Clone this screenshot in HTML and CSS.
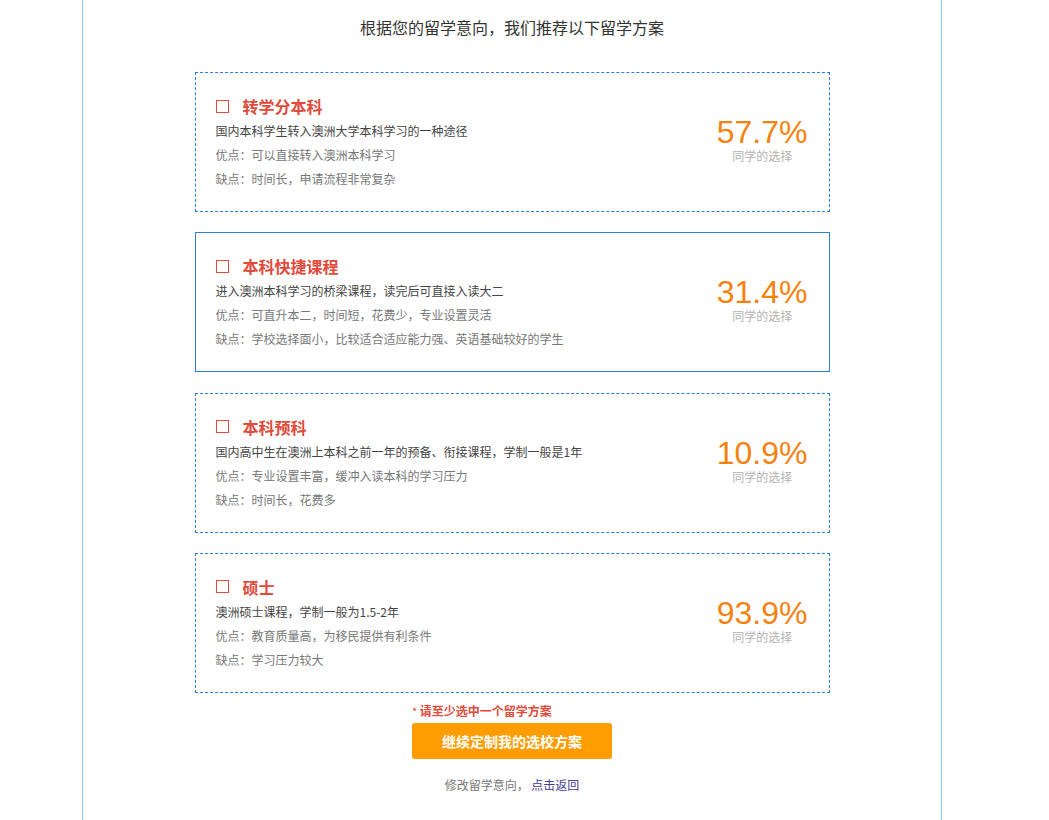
FILE: index.html
```html
<!DOCTYPE html>
<html lang="zh-CN">
<head>
<meta charset="utf-8">
<title>留学方案</title>
<link rel="stylesheet" href="styles.css">
</head>
<body>
<div class="page">
  <h1 class="heading">根据您的留学意向，我们推荐以下留学方案</h1>
  <div class="plans">
    <div class="plan">
      <div class="plan-info">
        <div class="plan-title"><span class="check"></span><span>转学分本科</span></div>
        <p class="desc">国内本科学生转入澳洲大学本科学习的一种途径</p>
        <p class="line">优点：可以直接转入澳洲本科学习</p>
        <p class="line">缺点：时间长，申请流程非常复杂</p>
      </div>
      <div class="plan-rate"><span class="pct">57.7%</span><span class="pct-label">同学的选择</span></div>
    </div>
    <div class="plan plan-active">
      <div class="plan-info">
        <div class="plan-title"><span class="check"></span><span>本科快捷课程</span></div>
        <p class="desc">进入澳洲本科学习的桥梁课程，读完后可直接入读大二</p>
        <p class="line">优点：可直升本二，时间短，花费少，专业设置灵活</p>
        <p class="line">缺点：学校选择面小，比较适合适应能力强、英语基础较好的学生</p>
      </div>
      <div class="plan-rate"><span class="pct">31.4%</span><span class="pct-label">同学的选择</span></div>
    </div>
    <div class="plan">
      <div class="plan-info">
        <div class="plan-title"><span class="check"></span><span>本科预科</span></div>
        <p class="desc">国内高中生在澳洲上本科之前一年的预备、衔接课程，学制一般是1年</p>
        <p class="line">优点：专业设置丰富，缓冲入读本科的学习压力</p>
        <p class="line">缺点：时间长，花费多</p>
      </div>
      <div class="plan-rate"><span class="pct">10.9%</span><span class="pct-label">同学的选择</span></div>
    </div>
    <div class="plan">
      <div class="plan-info">
        <div class="plan-title"><span class="check"></span><span>硕士</span></div>
        <p class="desc">澳洲硕士课程，学制一般为1.5-2年</p>
        <p class="line">优点：教育质量高，为移民提供有利条件</p>
        <p class="line">缺点：学习压力较大</p>
      </div>
      <div class="plan-rate"><span class="pct">93.9%</span><span class="pct-label">同学的选择</span></div>
    </div>
  </div>
  <div class="submit">
    <p class="warn"><span class="star">*</span> 请至少选中一个留学方案</p>
    <button class="btn" type="button">继续定制我的选校方案</button>
  </div>
  <p class="back">修改留学意向， <a href="#" class="back-link">点击返回</a></p>
</div>
</body>
</html>
```
FILE: styles.css
```css
html, body {
  margin: 0;
  padding: 0;
  background: #fff;
}
body {
  font-family: "Microsoft YaHei", "Noto Sans CJK SC", "Liberation Sans", sans-serif;
  color: #333;
}
.page {
  margin-left: 82px;
  width: 858px;
  min-height: 820px;
  border-left: 1px solid #8ec0f7;
  border-right: 1px solid #8ec0f7;
  padding-top: 16px;
}
.heading {
  margin: 0;
  font-size: 16px;
  font-weight: normal;
  line-height: 22px;
  text-align: center;
  color: #333;
}
.plans {
  width: 635px;
  margin: 34px auto 0;
  display: flex;
  flex-direction: column;
  gap: 20.3px;
}
.plan {
  box-sizing: border-box;
  height: 140px;
  border: 1px dashed #2b7de0;
  display: flex;
  align-items: flex-start;
  justify-content: space-between;
  padding: 0 21px 0 20px;
}
.plan-active {
  border: 1px solid #2b7de0;
}
.plan-info {
  padding-top: 22px;
}
.plan-title {
  display: flex;
  align-items: center;
  gap: 14px;
  font-size: 16px;
  font-weight: bold;
  color: #e24a3b;
  line-height: 22px;
  margin-bottom: 2px;
}
.check {
  display: inline-block;
  width: 11px;
  height: 11px;
  border: 1px solid #e8473a;
}
.desc, .line {
  margin: 0;
  font-size: 12px;
  line-height: 24px;
}
.desc {
  color: #444;
}
.line {
  color: #777;
}
.plan-rate {
  display: flex;
  flex-direction: column;
  align-items: center;
  padding-top: 43px;
}
.pct {
  font-family: "Liberation Sans", Arial, sans-serif;
  font-size: 32px;
  line-height: 32px;
  color: #f5820f;
}
.pct-label {
  font-size: 12px;
  line-height: 16px;
  color: #b3b3b3;
}
.submit {
  width: 200px;
  margin: 10px auto 0;
}
.warn {
  margin: 0;
  font-size: 12px;
  line-height: 16px;
  font-weight: bold;
  color: #e24a3b;
  white-space: nowrap;
}
.star {
  font-weight: normal;
  font-size: 11px;
}
.btn {
  display: block;
  margin-top: 4px;
  width: 200px;
  height: 36px;
  border: 0;
  border-radius: 3px;
  background: #ff9c00;
  color: #fff;
  font-family: inherit;
  font-size: 14px;
  font-weight: bold;
}
.back {
  margin: 17px 0 0;
  text-align: center;
  font-size: 12px;
  line-height: 18px;
  color: #777;
}
.back-link {
  color: #4a3b8f;
  text-decoration: none;
}
```
